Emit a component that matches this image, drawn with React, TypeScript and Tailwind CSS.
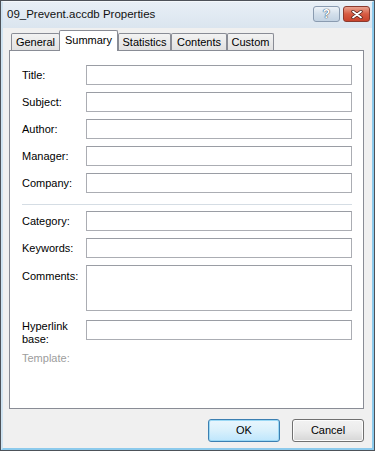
import React from 'react';

const rows = ['Title:', 'Subject:', 'Author:', 'Manager:', 'Company:'];
const rows2 = ['Category:', 'Keywords:'];
const tabs = [
  { label: 'General', w: 'w-[49px]', active: false },
  { label: 'Summary', w: 'w-[59px] -ml-[1px]', active: true },
  { label: 'Statistics', w: 'w-[53px]', active: false },
  { label: 'Contents', w: 'w-[56px]', active: false },
  { label: 'Custom', w: 'w-[47px]', active: false },
];

function Field({ label }: { label: string }) {
  return (
    <div className="flex items-center h-[20px]">
      <span className="w-[64px] shrink-0">{label}</span>
      <div className="w-[266px] h-[20px] bg-white border border-[#abadb3] border-t-[#9a9da4]" />
    </div>
  );
}

function TitleButtons() {
  return (
    <div className="flex items-center gap-[3px] -mt-[2px]">
      <div className="w-[27px] h-[16px] rounded-[3px] border border-[#8a9bb0] bg-gradient-to-b from-[#eef3f8] via-[#d3dfeb] to-[#c2d2e2] flex items-center justify-center text-white font-bold text-[12px] leading-none [text-shadow:0_0_1px_#24374f,0_0_1px_#24374f]">
        ?
      </div>
      <div className="w-[27px] h-[16px] rounded-[3px] border border-[#8b3a2e] bg-gradient-to-b from-[#e9a28f] via-[#d65b43] to-[#c8432c] flex items-center justify-center">
        <svg width="12" height="9" viewBox="0 0 12 9">
          <path d="M2 1.5 L10 7.5 M10 1.5 L2 7.5" stroke="#4a1a12" strokeWidth="3.2" strokeLinecap="round" />
          <path d="M2 1.5 L10 7.5 M10 1.5 L2 7.5" stroke="#ffffff" strokeWidth="1.8" strokeLinecap="round" />
        </svg>
      </div>
    </div>
  );
}

export default function App() {
  return (
    <div className="w-[375px] h-[451px] border border-[#4d5259] font-['Liberation_Sans',Arial,sans-serif] text-[11px] text-black">
      <div className="h-full flex flex-col border-l-2 border-r-2 border-b-2 border-t border-l-[#cfe3f1] border-r-[#8ccaec] border-b-[#8ccaec] border-t-[#f4f8fb] bg-[#f0f0f0]">
        <div className="h-[26px] shrink-0 flex items-center justify-between pl-[4px] pr-[2px] bg-gradient-to-b from-[#e8eff6] to-[#dbe5ef]">
          <span className="text-[11.5px] text-[#111]">09_Prevent.accdb Properties</span>
          <TitleButtons />
        </div>

        <div className="flex-1 flex flex-col pl-[6px] pr-[8px]">
          <div className="h-[20px] mt-[2px] flex items-end pl-[2px]">
            {tabs.map((t) =>
              t.active ? (
                <div
                  key={t.label}
                  className={`${t.w} h-[21px] -mb-px relative z-10 bg-white border border-b-0 border-[#898c95] rounded-t-[2px] flex items-center justify-center pb-[1px]`}
                >
                  {t.label}
                </div>
              ) : (
                <div
                  key={t.label}
                  className={`${t.w} h-[17px] bg-gradient-to-b from-[#f3f3f3] to-[#e1e1e1] border border-b-0 border-[#898c95] rounded-t-[2px] flex items-center justify-center`}
                >
                  {t.label}
                </div>
              )
            )}
          </div>

          <div className="w-[355px] h-[359px] bg-white border border-[#898c95] pl-[12px] pt-[14px] flex flex-col">
            <div className="flex flex-col gap-[7px]">
              {rows.map((r) => (
                <Field key={r} label={r} />
              ))}
            </div>
            <div className="w-[330px] h-px bg-[#d5dde4] mt-[11px] mb-[6px]" />
            <div className="flex flex-col gap-[7px]">
              {rows2.map((r) => (
                <Field key={r} label={r} />
              ))}
              <div className="flex items-start">
                <span className="w-[64px] shrink-0 pt-[3px]">Comments:</span>
                <div className="w-[266px] h-[46px] bg-white border border-[#abadb3] border-t-[#9a9da4]" />
              </div>
            </div>
            <div className="flex items-start mt-[9px]">
              <span className="w-[64px] shrink-0 leading-[13px]">
                Hyperlink
                <br />
                base:
              </span>
              <div className="w-[266px] h-[20px] bg-white border border-[#abadb3] border-t-[#9a9da4]" />
            </div>
            <span className="mt-[5px] text-[#9d9d9d] leading-[14px]">Template:</span>
          </div>

          <div className="flex justify-end gap-[12px] mt-[10px]">
            <button className="w-[72px] h-[23px] rounded-[3px] border border-[#3c7fb1] bg-gradient-to-b from-[#e9f6fd] via-[#d9f0fc] to-[#bee6fd] shadow-[inset_0_0_0_1px_#9ad8f5]">
              OK
            </button>
            <button className="w-[72px] h-[23px] rounded-[3px] border border-[#707070] bg-gradient-to-b from-[#f2f2f2] via-[#ebebeb] to-[#d6d6d6] shadow-[inset_0_0_0_1px_#fcfcfc]">
              Cancel
            </button>
          </div>
        </div>
      </div>
    </div>
  );
}
